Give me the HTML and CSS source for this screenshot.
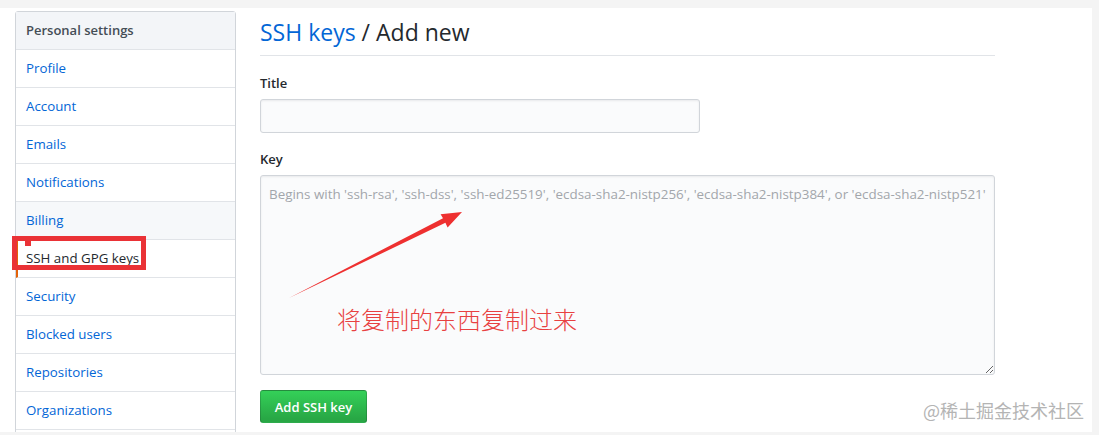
FILE: index.html
```html
<!DOCTYPE html>
<html lang="en">
<head>
<meta charset="utf-8">
<title>SSH keys / Add new</title>
<link rel="stylesheet" href="styles.css">
</head>
<body>
<div class="page">
  <nav class="menu">
    <div class="menu-heading">Personal settings</div>
    <a class="menu-item" href="#">Profile</a>
    <a class="menu-item" href="#">Account</a>
    <a class="menu-item" href="#">Emails</a>
    <a class="menu-item" href="#">Notifications</a>
    <a class="menu-item hover" href="#">Billing</a>
    <a class="menu-item selected" href="#">SSH and GPG keys</a>
    <a class="menu-item" href="#">Security</a>
    <a class="menu-item" href="#">Blocked users</a>
    <a class="menu-item" href="#">Repositories</a>
    <a class="menu-item" href="#">Organizations</a>
    <div class="menu-item menu-empty"></div>
  </nav>
  <main class="content">
    <div class="subhead">
      <h2 class="subhead-title"><a href="#">SSH keys</a> / Add new</h2>
    </div>
    <form class="form">
      <label class="label">Title</label>
      <input class="input title-input" type="text">
      <label class="label">Key</label>
      <textarea class="input key-input" placeholder="Begins with 'ssh-rsa', 'ssh-dss', 'ssh-ed25519', 'ecdsa-sha2-nistp256', 'ecdsa-sha2-nistp384', or 'ecdsa-sha2-nistp521'"></textarea>
      <button class="btn" type="button">Add SSH key</button>
    </form>
  </main>

  <div class="mark-box"></div>
  <svg class="arrow" width="1099" height="435" viewBox="0 0 1099 435">
    <polygon points="289,298 443,218.2 440.6,214.2 462,212 447.6,227.6 445.4,222.8" fill="#ee3030"/>
  </svg>
  <div class="note">将复制的东西复制过来</div>
  <div class="watermark">@稀土掘金技术社区</div>
</div>
</body>
</html>
```
FILE: styles.css
```css
* { box-sizing: border-box; }
html, body { margin: 0; padding: 0; }
body {
  background: #f4f4f4;
  font-family: "Segoe UI", "Open Sans", "Noto Sans", sans-serif;
  font-size: 14px;
  color: #24292e;
  width: 1099px;
  height: 435px;
  overflow: hidden;
}
.page {
  position: relative;
  margin-top: 8px;
  width: 1092px;
  height: 424px;
  background: #fff;
  display: flex;
  align-items: flex-start;
  gap: 24px;
  padding: 3px 0 0 15px;
  overflow: hidden;
}
.menu {
  width: 221px;
  flex: none;
  border: 1px solid #d1d5da;
  border-radius: 3px;
  display: flex;
  flex-direction: column;
  background: #fff;
}
.menu-heading {
  padding: 8px 10px;
  line-height: 21px;
  font-size: 13px;
  font-weight: 600;
  color: #444d56;
  background: #f3f5f8;
  border-bottom: 1px solid #e1e4e8;
}
.menu-item {
  display: block;
  padding: 8px 10px;
  line-height: 21px;
  font-size: 13.3px;
  color: #0366d6;
  text-decoration: none;
  border-bottom: 1px solid #e1e4e8;
}
.menu-empty { height: 38px; }
.menu-item.hover { background: #f6f8fa; }
.menu-item.selected {
  color: #24292e;
  border-left: 2px solid #e36209;
  padding-left: 8px;
}
.content {
  width: 735px;
  flex: none;
}
.subhead {
  border-bottom: 1px solid #e1e4e8;
  padding-top: 3px;
  padding-bottom: 5px;
}
.subhead-title {
  margin: 0;
  font-size: 23px;
  font-weight: 400;
  line-height: 36px;
  color: #24292e;
}
.subhead-title a { color: #0366d6; text-decoration: none; }
.form {
  display: flex;
  flex-direction: column;
  align-items: flex-start;
  padding-top: 17px;
}
.label {
  font-weight: 600;
  font-size: 13px;
  line-height: 21px;
  margin-bottom: 5px;
}
.input {
  background: #fafbfc;
  border: 1px solid #d1d5da;
  border-radius: 3px;
  box-shadow: inset 0 1px 2px rgba(27,31,35,0.075);
  font-family: inherit;
  font-size: 13.4px;
  color: #24292e;
  outline: none;
}
.title-input {
  width: 440px;
  height: 34px;
  margin-bottom: 16px;
}
.key-input {
  width: 735px;
  height: 200px;
  padding: 8px;
  line-height: 20px;
  margin-bottom: 15px;
  resize: vertical;
}
.key-input::placeholder { color: #a2a6ab; }
.btn {
  width: 107px;
  height: 33px;
  border: 1px solid rgba(27,31,35,0.2);
  border-radius: 3px;
  background: linear-gradient(180deg, #34d058, #28a745 90%);
  color: #fff;
  font-family: inherit;
  font-size: 13px;
  font-weight: 600;
  padding: 0;
}
.mark-box {
  position: absolute;
  left: 12px;
  top: 228px;
  width: 134px;
  height: 34px;
  border: 5px solid #ea3236;
}
.mark-box::after {
  content: "";
  position: absolute;
  left: 8px;
  top: 0;
  width: 6px;
  height: 5px;
  background: #ea3236;
}
.arrow {
  position: absolute;
  left: 0;
  top: -8px;
}
.note {
  position: absolute;
  left: 337px;
  top: 296px;
  font-family: "Noto Sans CJK SC", sans-serif;
  font-weight: 300;
  font-size: 24px;
  line-height: 30px;
  color: #e84141;
}
.watermark {
  position: absolute;
  left: 923px;
  top: 389px;
  font-family: "Noto Sans CJK SC", sans-serif;
  font-size: 18px;
  line-height: 26px;
  color: #b4b4b4;
}
```
